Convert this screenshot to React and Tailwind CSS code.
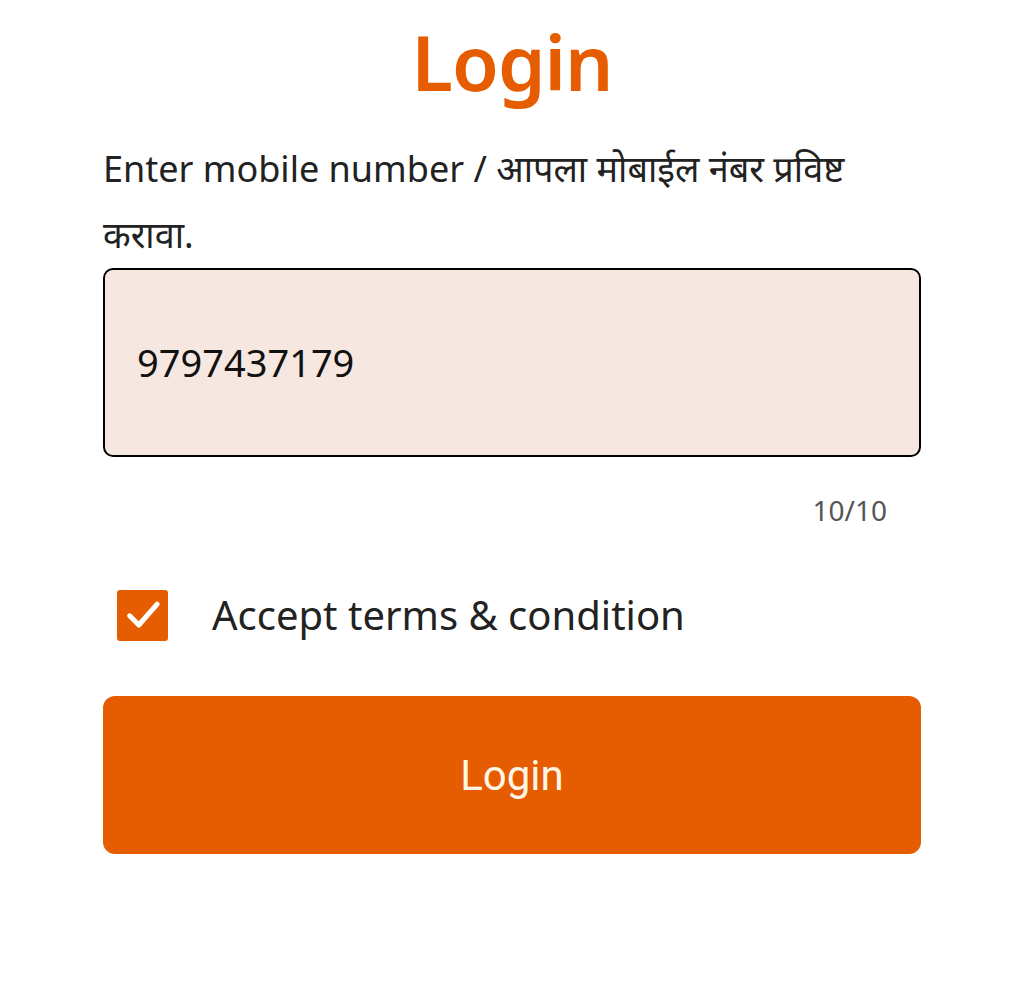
export default function App() {
  return (
    <div className="min-h-[986px] w-full bg-white font-['Noto_Sans',sans-serif]">
      <div className="mx-auto w-[818px] pt-[12px]">
        <h1 className="text-center text-[76px] font-semibold leading-[100px] tracking-[-1px] text-[#e65c00]">Login</h1>

        <p className="mt-[24px] w-[770px] text-[36px] leading-[66px] text-[#222]">
          Enter mobile number / आपला मोबाईल नंबर प्रविष्ट करावा.
        </p>

        <div className="mt-0 flex h-[189px] items-center rounded-[10px] border-2 border-black bg-[#f6e8e0] px-[32px]">
          <span className="text-[38px] text-[#111]">9797437179</span>
        </div>

        <div className="mt-[34px] pr-[34px] text-right text-[28px] leading-[38px] text-[#555]">10/10</div>

        <label className="mt-[60px] flex items-center gap-[44px] pl-[14px]">
          <span className="flex h-[51px] w-[51px] items-center justify-center rounded-[3px] bg-[#e65c00]">
            <svg width="40" height="40" viewBox="0 0 24 24" fill="none" stroke="white" strokeWidth="3" strokeLinecap="round" strokeLinejoin="round">
              <path d="M4 12.5l5.5 5.5L20.5 5.5" />
            </svg>
          </span>
          <span className="text-[40px] leading-[52px] text-[#222]">Accept terms &amp; condition</span>
        </label>

        <button className="mt-[55px] flex h-[158px] w-full items-center justify-center rounded-[12px] bg-[#e65c00] font-['Roboto',sans-serif] text-[42px] text-[#fff6e6]">
          Login
        </button>
      </div>
    </div>
  )
}
